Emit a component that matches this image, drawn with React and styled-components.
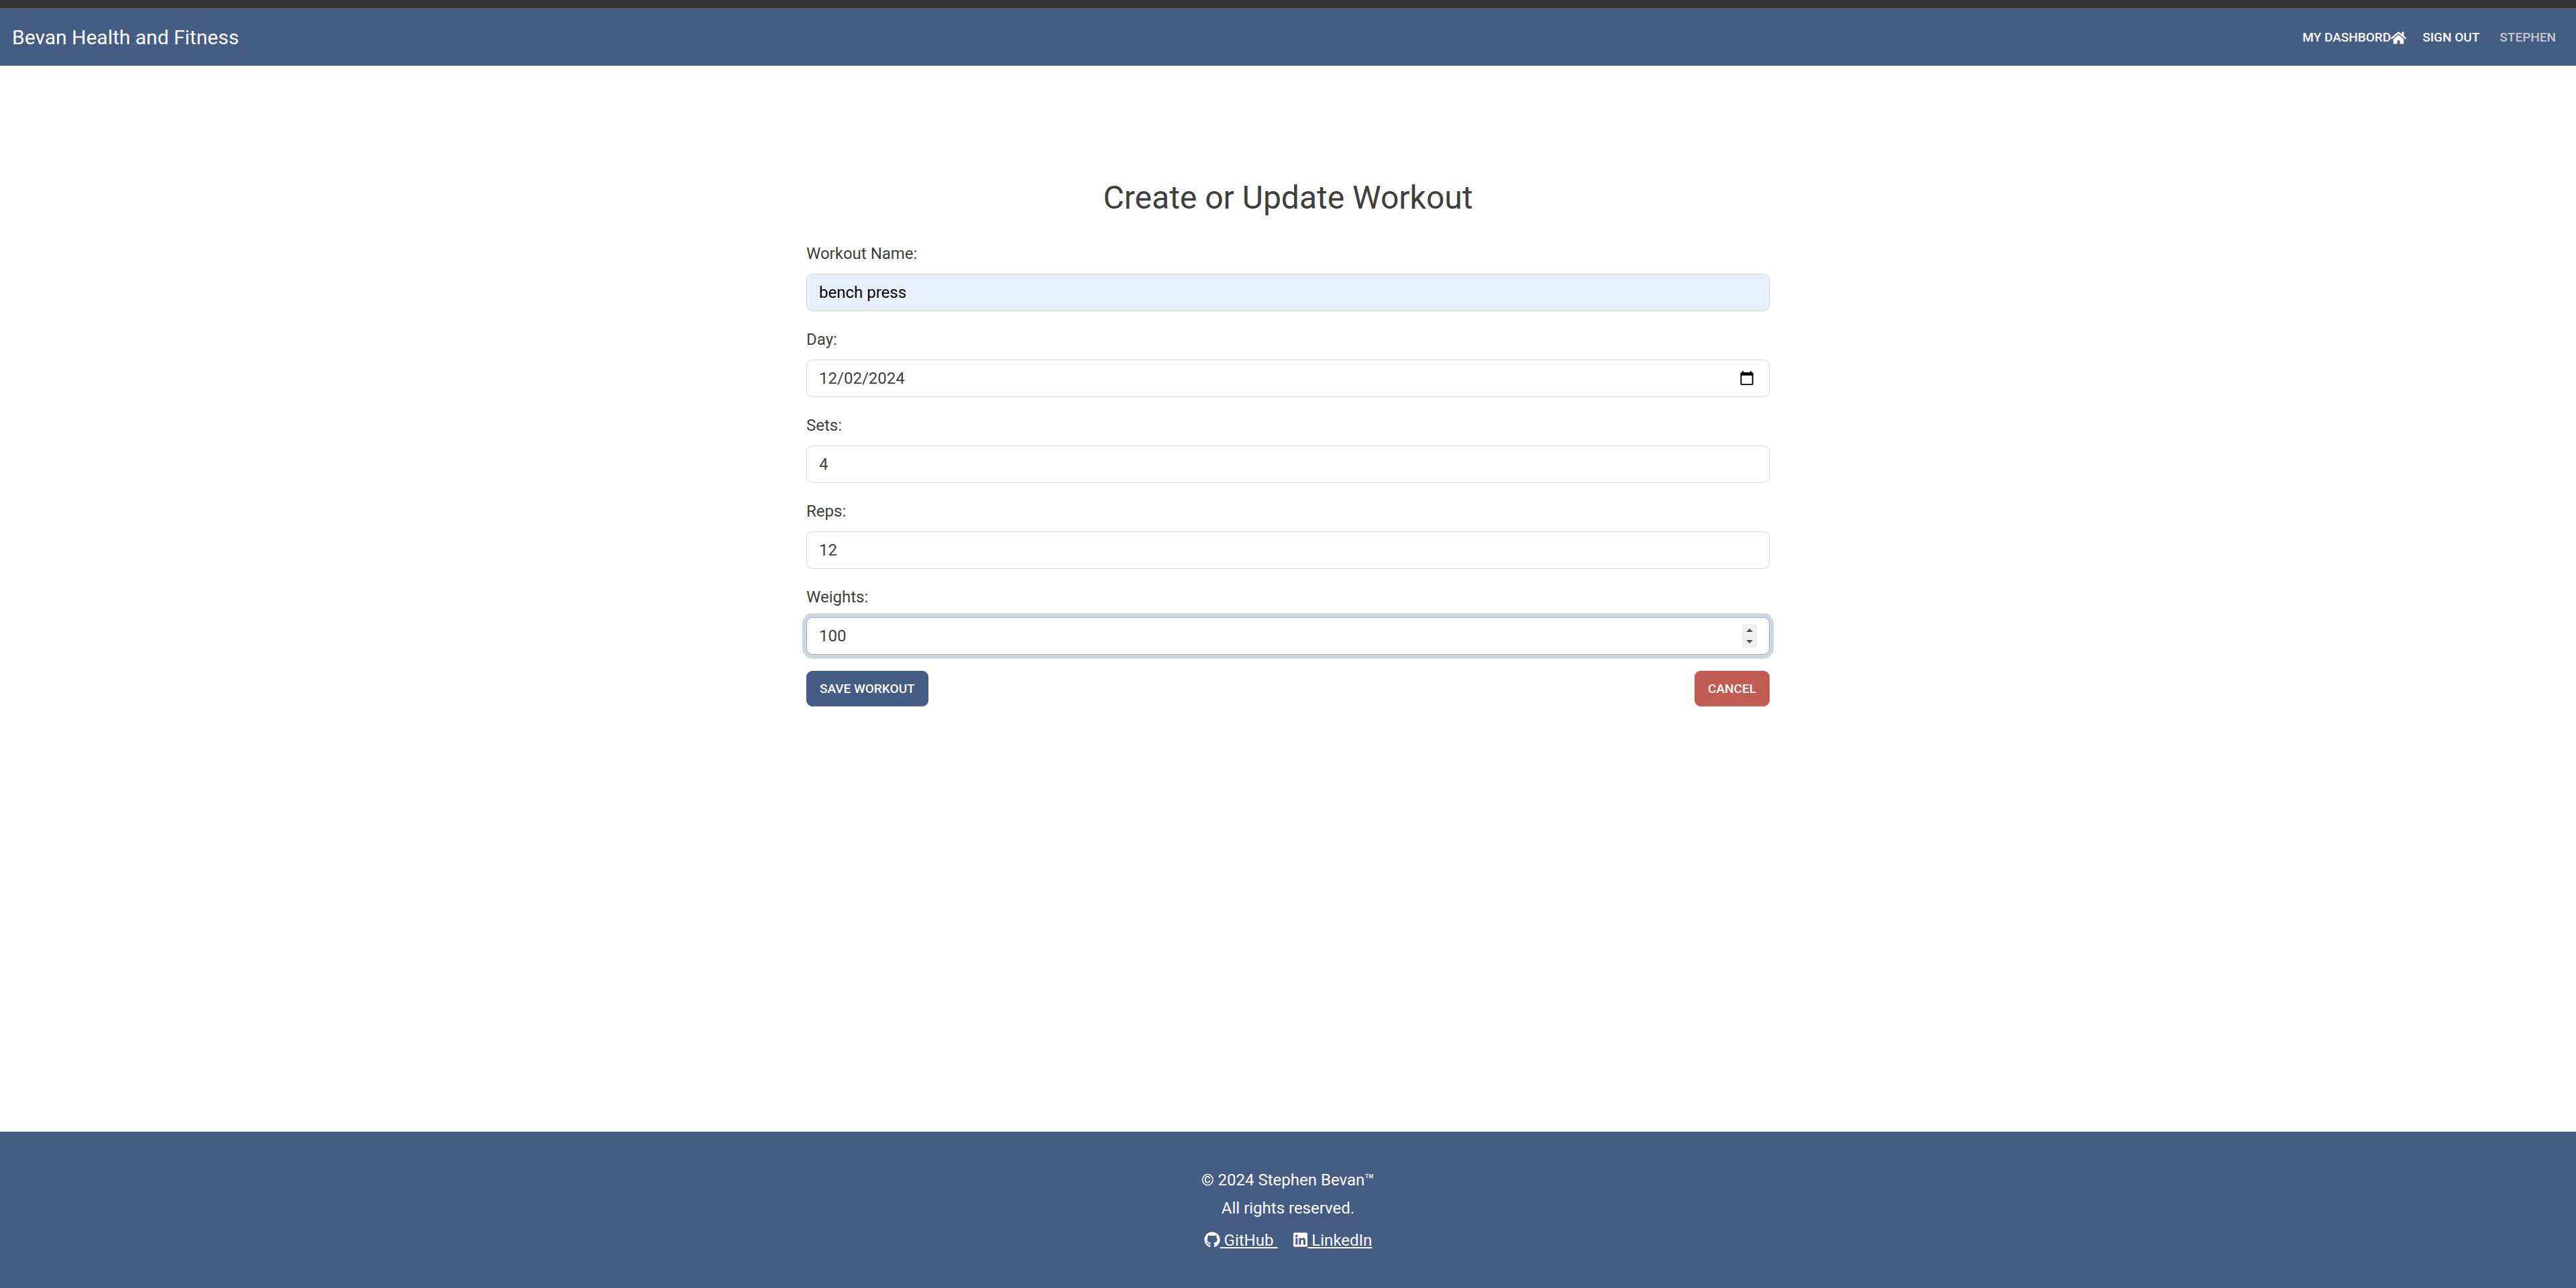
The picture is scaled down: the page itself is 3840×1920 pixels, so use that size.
import React, { useRef } from "react";
import styled, { createGlobalStyle } from "styled-components";
import { FaHome, FaGithub, FaLinkedin } from "react-icons/fa";

const GlobalStyle = createGlobalStyle`
  *, *::before, *::after { box-sizing: border-box; }
  body {
    margin: 0;
    background: #fff;
    color: #3e3f3a;
    font-family: Roboto, "Liberation Sans", sans-serif;
    font-size: 24px;
    line-height: 36px;
  }
`;

const Page = styled.div`
  min-height: 100vh;
  display: flex;
  flex-direction: column;
`;

const TopStrip = styled.div`
  height: 14px;
  background: #353535;
  border-bottom: 2px solid #5f5f5f;
`;

const Navbar = styled.header`
  display: flex;
  align-items: center;
  justify-content: space-between;
  min-height: 84px;
  padding: 0 18px;
  background: #455c84;
  color: #fff;
`;

const Brand = styled.a`
  font-size: 30px;
  line-height: 44px;
  color: inherit;
  text-decoration: none;
`;

const Nav = styled.nav`
  display: flex;
  align-items: center;
`;

const NavLink = styled.a`
  display: flex;
  align-items: center;
  padding: 0 12px;
  font-size: 19px;
  line-height: 32px;
  font-weight: 500;
  text-transform: uppercase;
  text-decoration: none;
  color: #fff;
`;

const NavUser = styled.span`
  padding: 0 12px 0 18px;
  font-size: 19px;
  line-height: 32px;
  font-weight: 500;
  text-transform: uppercase;
  color: #c8c8c8;
`;

const Main = styled.main`
  flex: 1;
  width: 100%;
  max-width: 1436px;
  margin: 0 auto;
  padding: 168px 0 48px;
`;

const Title = styled.h2`
  margin: 0 0 36px;
  font-size: 48px;
  line-height: 58px;
  font-weight: 400;
  text-align: center;
`;

const Form = styled.form`
  display: flex;
  flex-direction: column;
  gap: 24px;
`;

const Field = styled.div`
  display: flex;
  flex-direction: column;
  gap: 12px;
`;

const InputWrap = styled.div`
  position: relative;
  display: flex;
`;

const Input = styled.input`
  width: 100%;
  height: 56px;
  padding: 0 18px;
  border: 1px solid ${(p) => (p.$active ? "#a2aec2" : "#dfd7ca")};
  border-radius: 9px;
  outline: none;
  background: ${(p) => (p.$filled ? "#e8effc" : "#fff")};
  box-shadow: ${(p) => (p.$active ? "0 0 0 6px #d0d6e0" : "none")};
  color: ${(p) => (p.$filled ? "#000" : "#3e3f3a")};
  font: inherit;
  appearance: textfield;

  &::-webkit-inner-spin-button,
  &::-webkit-outer-spin-button {
    appearance: none;
    margin: 0;
  }

  &::-webkit-datetime-edit-month-field,
  &::-webkit-datetime-edit-day-field,
  &::-webkit-datetime-edit-year-field {
    padding: 0;
  }

  &::-webkit-calendar-picker-indicator {
    box-sizing: content-box;
    width: 24px;
    height: 24px;
    padding: 3px;
  }
`;

const Stepper = styled.div`
  position: absolute;
  top: 10px;
  right: 19px;
  width: 22px;
  height: 36px;
  display: flex;
  flex-direction: column;
  background: #f0f0f0;
`;

const StepButton = styled.button`
  flex: 1;
  display: flex;
  align-items: ${(p) => (p.$down ? "flex-start" : "flex-end")};
  justify-content: center;
  padding: 6px 0;
  border: 0;
  background: none;
  color: #505050;
`;

const Actions = styled.div`
  display: flex;
  justify-content: space-between;
`;

const Button = styled.button`
  height: 53px;
  padding: 0 19px;
  border: 1px solid ${(p) => (p.$danger ? "#c15c54" : "#455c84")};
  border-radius: 9px;
  background: ${(p) => (p.$danger ? "#c15c54" : "#455c84")};
  color: #fff;
  font: inherit;
  font-size: 19px;
  line-height: 32px;
  font-weight: 500;
  text-transform: uppercase;
`;

const Footer = styled.footer`
  display: flex;
  flex-direction: column;
  align-items: center;
  padding: 54px 0 53px;
  background: #455c84;
  color: #fff;
`;

const FooterText = styled.p`
  margin: 0 0 6px;
`;

const Socials = styled.div`
  display: flex;
  gap: 24px;
  margin-top: 6px;
`;

const SocialLink = styled.a`
  color: inherit;
  white-space: pre;
  text-decoration: underline;

  svg {
    width: ${(p) => p.$iconWidth}px;
    height: 24px;
    vertical-align: -3px;
  }
`;

const FIELDS = [
  { id: "name", label: "Workout Name:", type: "text", value: "bench press", filled: true },
  { id: "day", label: "Day:", type: "date", value: "2024-12-02" },
  { id: "sets", label: "Sets:", type: "number", value: "4" },
  { id: "reps", label: "Reps:", type: "number", value: "12" },
  { id: "weights", label: "Weights:", type: "number", value: "100", active: true },
];

function FormField({ id, label, type, value, filled, active }) {
  const ref = useRef(null);
  return (
    <Field>
      <label htmlFor={id}>{label}</label>
      <InputWrap>
        <Input ref={ref} id={id} type={type} defaultValue={value} $filled={filled} $active={active} />
        {active && (
          <Stepper>
            <StepButton type="button" aria-label="Increase" onClick={() => ref.current.stepUp()}>
              <svg width="10" height="5" viewBox="0 0 10 5">
                <path d="M0 5L5 0L10 5Z" fill="currentColor" />
              </svg>
            </StepButton>
            <StepButton $down type="button" aria-label="Decrease" onClick={() => ref.current.stepDown()}>
              <svg width="10" height="5" viewBox="0 0 10 5">
                <path d="M0 0L5 5L10 0Z" fill="currentColor" />
              </svg>
            </StepButton>
          </Stepper>
        )}
      </InputWrap>
    </Field>
  );
}

export default function App() {
  return (
    <Page>
      <GlobalStyle />
      <TopStrip />
      <Navbar>
        <Brand href="#">Bevan Health and Fitness</Brand>
        <Nav>
          <NavLink href="#">
            My Dashbord
            <FaHome size={23} />
          </NavLink>
          <NavLink href="#">Sign Out</NavLink>
          <NavUser>Stephen</NavUser>
        </Nav>
      </Navbar>
      <Main>
        <Title>Create or Update Workout</Title>
        <Form onSubmit={(e) => e.preventDefault()}>
          {FIELDS.map((f) => (
            <FormField key={f.id} {...f} />
          ))}
          <Actions>
            <Button type="submit">Save Workout</Button>
            <Button type="button" $danger>Cancel</Button>
          </Actions>
        </Form>
      </Main>
      <Footer>
        <FooterText>© 2024 Stephen Bevan™</FooterText>
        <FooterText>All rights reserved.</FooterText>
        <Socials>
          <SocialLink href="#" $iconWidth={24}>
            <FaGithub />
            {" GitHub "}
          </SocialLink>
          <SocialLink href="#" $iconWidth={21}>
            <FaLinkedin />
            {" LinkedIn"}
          </SocialLink>
        </Socials>
      </Footer>
    </Page>
  );
}
